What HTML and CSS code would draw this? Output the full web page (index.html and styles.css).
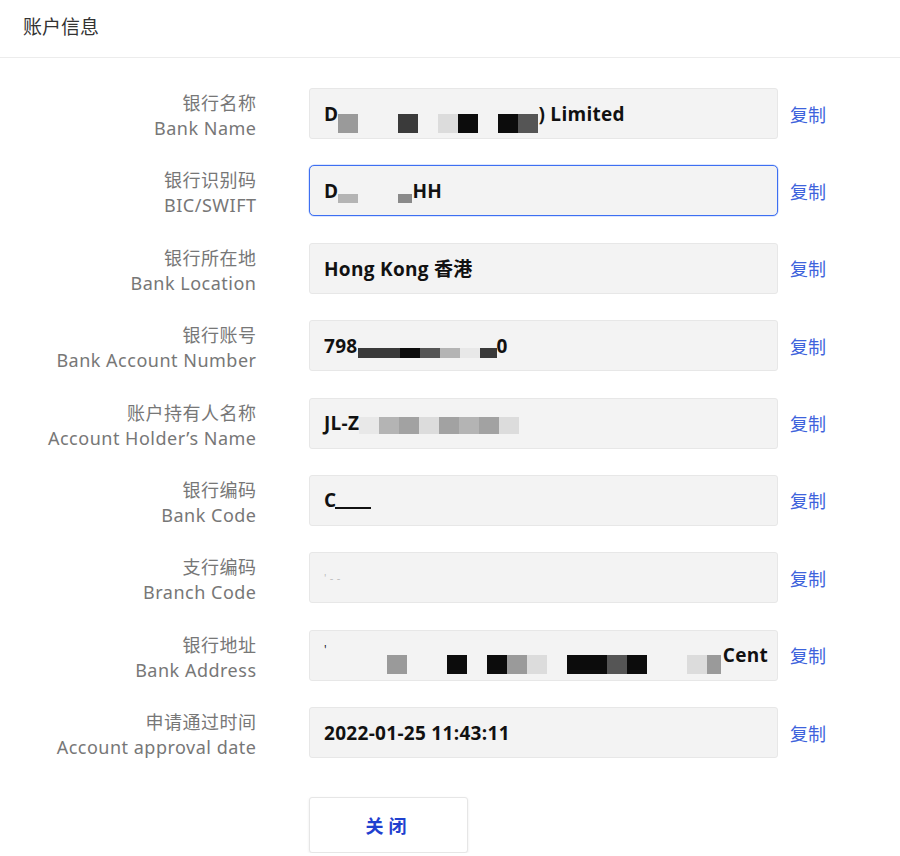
FILE: index.html
```html
<!DOCTYPE html>
<html lang="zh-CN">
<head>
  <meta charset="UTF-8" />
  <title>账户信息</title>
  <link rel="stylesheet" href="styles.css">
</head>
<body>
  <div class="header">账户信息</div>
  <div class="info-form">
    <div class="row">
      <div class="label"><span>银行名称</span><span>Bank Name</span></div>
      <div class="field">D<i class="blk c-gray"></i><i class="sp w2"></i><i class="blk c-dark"></i><i class="sp"></i><i class="blk c-light"></i><i class="blk c-black"></i><i class="sp"></i><i class="blk c-black"></i><i class="blk c-dark2"></i>) Limited</div>
      <a class="copy">复制</a>
    </div>
    <div class="row">
      <div class="label"><span>银行识别码</span><span>BIC/SWIFT</span></div>
      <div class="field focus">D<i class="blk thin c-silver"></i><i class="sp w2"></i><i class="blk thin small c-mid"></i>HH</div>
      <a class="copy">复制</a>
    </div>
    <div class="row">
      <div class="label"><span>银行所在地</span><span>Bank Location</span></div>
      <div class="field">Hong Kong 香港</div>
      <a class="copy">复制</a>
    </div>
    <div class="row">
      <div class="label"><span>银行账号</span><span>Bank Account Number</span></div>
      <div class="field">798<i class="bar wide c-dark"></i><i class="bar c-black"></i><i class="bar c-dark2"></i><i class="bar c-silver"></i><i class="bar c-pale"></i><i class="bar short c-dark"></i>0</div>
      <a class="copy">复制</a>
    </div>
    <div class="row">
      <div class="label"><span>账户持有人名称</span><span>Account Holder’s Name</span></div>
      <div class="field">JL-Z<i class="blk mid c-pale"></i><i class="blk mid c-silver"></i><i class="blk mid c-mid2"></i><i class="blk mid c-light"></i><i class="blk mid c-mid2"></i><i class="blk mid c-silver"></i><i class="blk mid c-mid2"></i><i class="blk mid c-light"></i></div>
      <a class="copy">复制</a>
    </div>
    <div class="row">
      <div class="label"><span>银行编码</span><span>Bank Code</span></div>
      <div class="field">C<i class="under"></i></div>
      <a class="copy">复制</a>
    </div>
    <div class="row">
      <div class="label"><span>支行编码</span><span>Branch Code</span></div>
      <div class="field faint">' - -</div>
      <a class="copy">复制</a>
    </div>
    <div class="row">
      <div class="label"><span>银行地址</span><span>Bank Address</span></div>
      <div class="field clip"><span class="dot">'</span><i class="sp lead"></i><i class="blk low c-gray"></i><i class="sp w2"></i><i class="blk low c-black"></i><i class="sp"></i><i class="blk low c-black"></i><i class="blk low c-gray"></i><i class="blk low c-light"></i><i class="sp"></i><i class="blk low c-black"></i><i class="blk low c-black"></i><i class="blk low c-dark2"></i><i class="blk low c-black"></i><i class="sp w2"></i><i class="blk low c-light"></i><i class="blk low small c-gray"></i><span class="tail">Cent</span></div>
      <a class="copy">复制</a>
    </div>
    <div class="row">
      <div class="label"><span>申请通过时间</span><span>Account approval date</span></div>
      <div class="field">2022-01-25 11:43:11</div>
      <a class="copy">复制</a>
    </div>
    <div class="actions">
      <button class="close-btn">关闭</button>
    </div>
  </div>
</body>
</html>
```
FILE: styles.css
```css
body {
  margin: 0;
  background: #fff;
  font-family: "Noto Sans", "Noto Sans CJK SC", sans-serif;
  color: #333;
}
.header {
  height: 57px;
  line-height: 54px;
  padding-left: 23px;
  font-size: 19px;
  color: #333;
  border-bottom: 1px solid #ececec;
}
.info-form {
  padding-top: 30px;
}
.row {
  display: grid;
  grid-template-columns: 256px 469px auto;
  grid-template-rows: 51px;
  column-gap: 53px;
  align-items: center;
  margin-bottom: 26.4px;
}
.row .copy {
  margin-left: -41px;
}
.label {
  display: flex;
  flex-direction: column;
  align-items: flex-end;
  font-size: 18px;
  line-height: 25px;
  letter-spacing: 0.5px;
  color: #777;
  margin-top: 5px;
  margin-right: -0.5px;
  white-space: nowrap;
}
.field {
  box-sizing: border-box;
  height: 51px;
  display: flex;
  align-items: center;
  padding: 0 14px;
  background: #f3f3f3;
  border: 1px solid #e7e7e7;
  border-radius: 3px;
  font-family: "Open Sans", "Noto Sans CJK SC", sans-serif;
  font-weight: 700;
  font-size: 19px;
  letter-spacing: 0.3px;
  color: #111;
  white-space: nowrap;
  overflow: hidden;
}
.field.focus {
  border-color: #3d6ff2;
  border-radius: 5px;
  box-shadow: 0 0 0 0.5px rgba(61, 111, 242, 0.35);
}
.field.faint {
  font-weight: 400;
  font-size: 11px;
  color: #bbb;
}
.field .dot {
  font-weight: 400;
  font-size: 12px;
  margin-top: -12px;
}
.field .tail {
  margin-left: auto;
  margin-right: -5px;
}
.copy {
  font-size: 18px;
  color: #3e63dc;
  cursor: pointer;
}
.blk {
  display: inline-block;
  width: 20px;
  height: 19px;
  flex: none;
  align-self: flex-end;
  margin-bottom: 5px;
}
.blk.thin {
  height: 9px;
  margin-bottom: 12px;
}
.blk.small {
  width: 14px;
}
.blk.mid {
  height: 17px;
  margin-bottom: 14px;
}
.blk.low {
  margin-bottom: 6px;
}
.sp {
  display: inline-block;
  width: 20px;
  flex: none;
}
.sp.w2 {
  width: 40px;
}
.sp.lead {
  width: 60px;
}
.bar {
  display: inline-block;
  width: 20px;
  height: 10px;
  margin-top: 15px;
  flex: none;
}
.bar.wide {
  width: 42px;
}
.bar.short {
  width: 17px;
}
.under {
  display: inline-block;
  width: 36px;
  height: 2px;
  background: #111;
  margin-top: 16px;
  margin-left: -1px;
}
.c-gray { background: #9a9a9a; }
.c-dark { background: #3a3a3a; }
.c-dark2 { background: #555; }
.c-light { background: #dcdcdc; }
.c-black { background: #0c0c0c; }
.c-silver { background: #b4b4b4; }
.c-mid { background: #8a8a8a; }
.c-mid2 { background: #a2a2a2; }
.c-pale { background: #e8e8e8; }
.actions {
  padding: 12px 0 0 309px;
}
.close-btn {
  width: 159px;
  height: 56px;
  background: #fff;
  border: 1px solid #e6e6e6;
  border-radius: 3px;
  box-shadow: 0 1px 3px rgba(0,0,0,0.08);
  font-family: "Noto Sans CJK SC", sans-serif;
  font-size: 18px;
  font-weight: 700;
  letter-spacing: 5px;
  color: #1f40cf;
  cursor: pointer;
}
```
